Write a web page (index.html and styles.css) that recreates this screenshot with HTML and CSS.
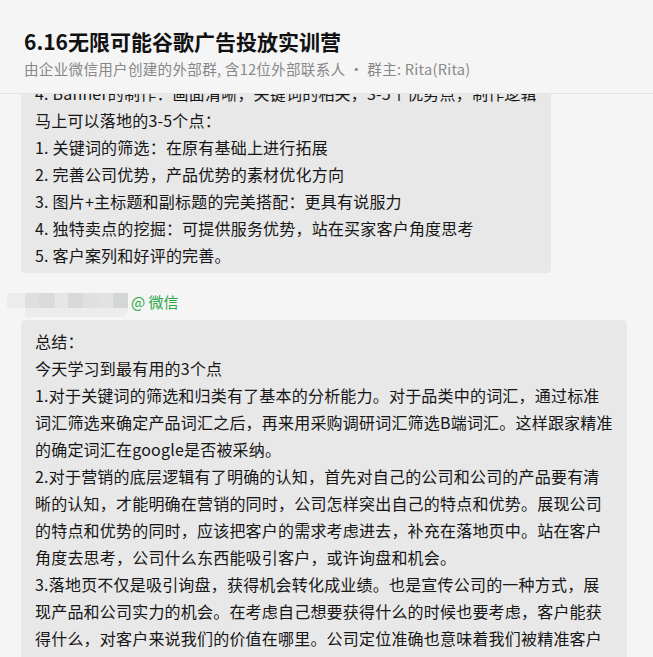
FILE: index.html
```html
<!DOCTYPE html>
<html lang="zh-CN">
<head>
<meta charset="utf-8">
<title>6.16无限可能谷歌广告投放实训营</title>
<link rel="stylesheet" href="styles.css">
</head>
<body>
<div class="app">
  <header class="header">
    <h1 class="title">6.16无限可能谷歌广告投放实训营</h1>
    <p class="subtitle">由企业微信用户创建的外部群, 含12位外部联系人 · 群主: Rita(Rita)</p>
  </header>
  <main class="chat">
    <div class="feed">
      <div class="bubble">
        <p>4. Banner的制作：画面清晰，关键词的相关，3-5个优势点，制作逻辑</p>
        <p>马上可以落地的3-5个点：</p>
        <p>1. 关键词的筛选：在原有基础上进行拓展</p>
        <p>2. 完善公司优势，产品优势的素材优化方向</p>
        <p>3. 图片+主标题和副标题的完美搭配：更具有说服力</p>
        <p>4. 独特卖点的挖掘：可提供服务优势，站在买家客户角度思考</p>
        <p>5. 客户案列和好评的完善。</p>
      </div>
      <div class="sender">
        <div class="mosaic">
          <div class="tiles">
            <span class="t1"></span><span class="t2"></span><span class="t3"></span><span class="t4"></span><span class="t5"></span><span class="t6"></span><span class="t7"></span><span class="t8"></span>
          </div>
          <div class="tail"></div>
        </div>
        <span class="source">@ 微信</span>
      </div>
      <div class="bubble">
        <p>总结：</p>
        <p>今天学习到最有用的3个点</p>
        <p>1.对于关键词的筛选和归类有了基本的分析能力。对于品类中的词汇，通过标准词汇筛选来确定产品词汇之后，再来用采购调研词汇筛选B端词汇。这样跟家精准的确定词汇在google是否被采纳。</p>
        <p>2.对于营销的底层逻辑有了明确的认知，首先对自己的公司和公司的产品要有清晰的认知，才能明确在营销的同时，公司怎样突出自己的特点和优势。展现公司的特点和优势的同时，应该把客户的需求考虑进去，补充在落地页中。站在客户角度去思考，公司什么东西能吸引客户，或许询盘和机会。</p>
        <p>3.落地页不仅是吸引询盘，获得机会转化成业绩。也是宣传公司的一种方式，展现产品和公司实力的机会。在考虑自己想要获得什么的时候也要考虑，客户能获得什么，对客户来说我们的价值在哪里。公司定位准确也意味着我们被精准客户找到的机会更大。</p>
      </div>
    </div>
  </main>
</div>
</body>
</html>
```

FILE: styles.css
```css
* {
  box-sizing: border-box;
}

html,
body {
  margin: 0;
  padding: 0;
  background: #f5f5f5;
}

body {
  font-family: "Noto Sans CJK SC", "Noto Sans", sans-serif;
  color: #161616;
}

.app {
  width: 653px;
  height: 657px;
  display: flex;
  flex-direction: column;
  overflow: hidden;
}

.header {
  flex: 0 0 94px;
  padding: 27px 24px 0;
  border-bottom: 1px solid #e4e4e4;
  background: #f5f5f5;
}

.title {
  margin: 0;
  font-size: 21px;
  line-height: 28px;
  font-weight: 700;
  color: #111;
}

.subtitle {
  margin: 4px 0 0;
  font-size: 14.6px;
  letter-spacing: 0.25px;
  line-height: 20px;
  color: #888;
}

.chat {
  flex: 1;
  overflow: hidden;
  padding-left: 7px;
}

.feed {
  margin-top: -22px;
  display: flex;
  flex-direction: column;
  align-items: flex-start;
}

.bubble {
  margin-left: 14px;
  max-width: 606px;
  padding: 8px 14px 4px;
  background: #e8e8e8;
  border-radius: 4px;
  font-size: 16px;
  letter-spacing: 0.2px;
  line-height: 27px;
}

.bubble p {
  margin: 0;
}

.sender {
  margin: 17px 0 8px;
  height: 22px;
  display: flex;
  align-items: center;
}

.mosaic {
  display: flex;
  flex-direction: column;
  margin-top: 8px;
}

.tiles {
  display: flex;
  height: 15px;
}

.tiles span {
  display: block;
  height: 15px;
}

.tiles .t1 { width: 18px; background: #ececec; }
.tiles .t2 { width: 14px; background: #dfdfdf; }
.tiles .t3 { width: 16px; background: #dadbdc; }
.tiles .t4 { width: 13px; background: #e6e6e6; }
.tiles .t5 { width: 15px; background: #d8d9da; }
.tiles .t6 { width: 17px; background: #dfe0df; }
.tiles .t7 { width: 13px; background: #e2e3e0; }
.tiles .t8 { width: 15px; background: #d4d5d7; }

.tail {
  margin-left: 18px;
  width: 103px;
  height: 9px;
  background: #ececec;
  border-radius: 0 0 8px 0;
}

.source {
  margin-left: 3px;
  font-size: 15px;
  color: #2aa84a;
}
```
